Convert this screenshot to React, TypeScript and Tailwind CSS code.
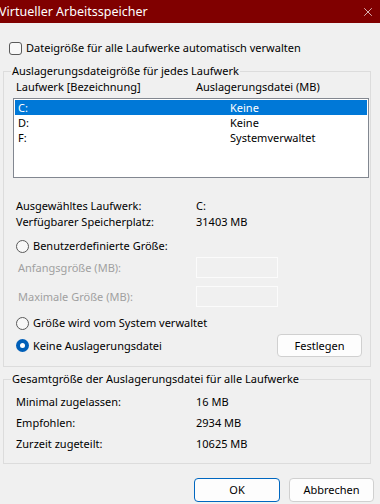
import { X } from "lucide-react"

const Radio = ({ checked }: { checked?: boolean }) =>
  checked ? (
    <span className="w-[13px] h-[13px] rounded-full bg-[#005fb8] flex items-center justify-center shrink-0">
      <span className="w-[5px] h-[5px] rounded-full bg-white" />
    </span>
  ) : (
    <span className="w-[13px] h-[13px] rounded-full border border-[#5a5a5a] bg-[#f8f8f8] shrink-0" />
  )

const drives = [
  { name: "C:", size: "Keine", selected: true },
  { name: "D:", size: "Keine" },
  { name: "F:", size: "Systemverwaltet" },
]

const totals = [
  ["Minimal zugelassen:", "16 MB"],
  ["Empfohlen:", "2934 MB"],
  ["Zurzeit zugeteilt:", "10625 MB"],
]

export default function App() {
  return (
    <div
      className="w-[380px] h-[504px] bg-[#f0f0f0] overflow-hidden text-[11px] leading-[16px] text-black"
      style={{ fontFamily: '"Noto Sans", "Open Sans", sans-serif' }}
    >
      {/* Titelleiste */}
      <div className="h-[23px] bg-[#800000] flex items-center justify-between text-white text-[12.5px]">
        <span className="ml-[-1px]">Virtueller Arbeitsspeicher</span>
        <X size={14} strokeWidth={1.2} className="mr-[5px]" />
      </div>

      <div className="px-[3px]">
        <label className="h-[14px] mt-[18px] flex items-center gap-[4px] pl-[6px]">
          <span className="w-[13px] h-[13px] rounded-[3px] border border-[#5a5a5a] bg-[#f8f8f8]" />
          <span>Dateigröße für alle Laufwerke automatisch verwalten</span>
        </label>

        {/* Gruppe 1 */}
        <fieldset className="mt-[8px] w-[368px] h-[304px] border border-[#dcdcdc]">
          <legend className="ml-[7px] px-[1px] leading-[16px]">
            Auslagerungsdateigröße für jedes Laufwerk
          </legend>
          <div className="flex h-[16px] items-center pl-[12px]">
            <span className="w-[180px]">Laufwerk [Bezeichnung]</span>
            <span>Auslagerungsdatei (MB)</span>
          </div>
          <div className="ml-[9px] mt-[3px] w-[356px] h-[80px] border border-[#828790] bg-white p-[1px]">
            {drives.map((d) => (
              <div
                key={d.name}
                className={
                  "flex h-[15px] leading-[15px] items-center pl-[3px] " +
                  (d.selected ? "bg-[#0078d7] text-white" : "")
                }
              >
                <span className="w-[212px]">{d.name}</span>
                <span>{d.size}</span>
              </div>
            ))}
          </div>

          <div className="mt-[20px] pl-[12px]">
            <div className="flex h-[16px] items-center">
              <span className="w-[180px]">Ausgewähltes Laufwerk:</span>
              <span>C:</span>
            </div>
            <div className="flex h-[16px] items-center">
              <span className="w-[180px]">Verfügbarer Speicherplatz:</span>
              <span>31403 MB</span>
            </div>
          </div>

          <div className="mt-[8px] pl-[12px] flex h-[16px] items-center gap-[4px]">
            <Radio />
            <span>Benutzerdefinierte Größe:</span>
          </div>

          <div className="mt-[3px] pl-[14px] flex h-[21px] items-center text-[#a0a0a0]">
            <span className="w-[178px]">Anfangsgröße (MB):</span>
            <span className="w-[82px] h-[21px] border border-[#fbfbfb]" />
          </div>
          <div className="mt-[8px] pl-[14px] flex h-[21px] items-center text-[#a0a0a0]">
            <span className="w-[178px]">Maximale Größe (MB):</span>
            <span className="w-[82px] h-[21px] border border-[#fbfbfb]" />
          </div>

          <div className="mt-[8px] pl-[12px] flex h-[16px] items-center gap-[4px]">
            <Radio />
            <span>Größe wird vom System verwaltet</span>
          </div>
          <div className="mt-[3px] pl-[12px] pr-[8px] flex h-[23px] items-center justify-between">
            <div className="flex items-center gap-[4px]">
              <Radio checked />
              <span>Keine Auslagerungsdatei</span>
            </div>
            <button className="w-[85px] h-[23px] rounded-[4px] border border-[#d0d0d0] bg-[#fdfdfd]">
              Festlegen
            </button>
          </div>
        </fieldset>

        {/* Gruppe 2 */}
        <fieldset className="mt-[4px] w-[368px] h-[93px] border border-[#dcdcdc]">
          <legend className="ml-[7px] px-[1px] leading-[16px]">
            Gesamtgröße der Auslagerungsdatei für alle Laufwerke
          </legend>
          <div className="pl-[12px] mt-[7px] flex flex-col gap-[5px]">
            {totals.map(([k, v]) => (
              <div key={k} className="flex h-[16px] items-center">
                <span className="w-[180px]">{k}</span>
                <span>{v}</span>
              </div>
            ))}
          </div>
        </fieldset>

        <div className="mt-[14px] flex justify-end gap-[9px] pr-[3px]">
          <button className="w-[86px] h-[24px] rounded-[4px] border border-[#0067c0] bg-[#fdfdfd]">
            OK
          </button>
          <button className="w-[85px] h-[24px] rounded-[4px] border border-[#d0d0d0] bg-[#fdfdfd]">
            Abbrechen
          </button>
        </div>
      </div>
    </div>
  )
}
